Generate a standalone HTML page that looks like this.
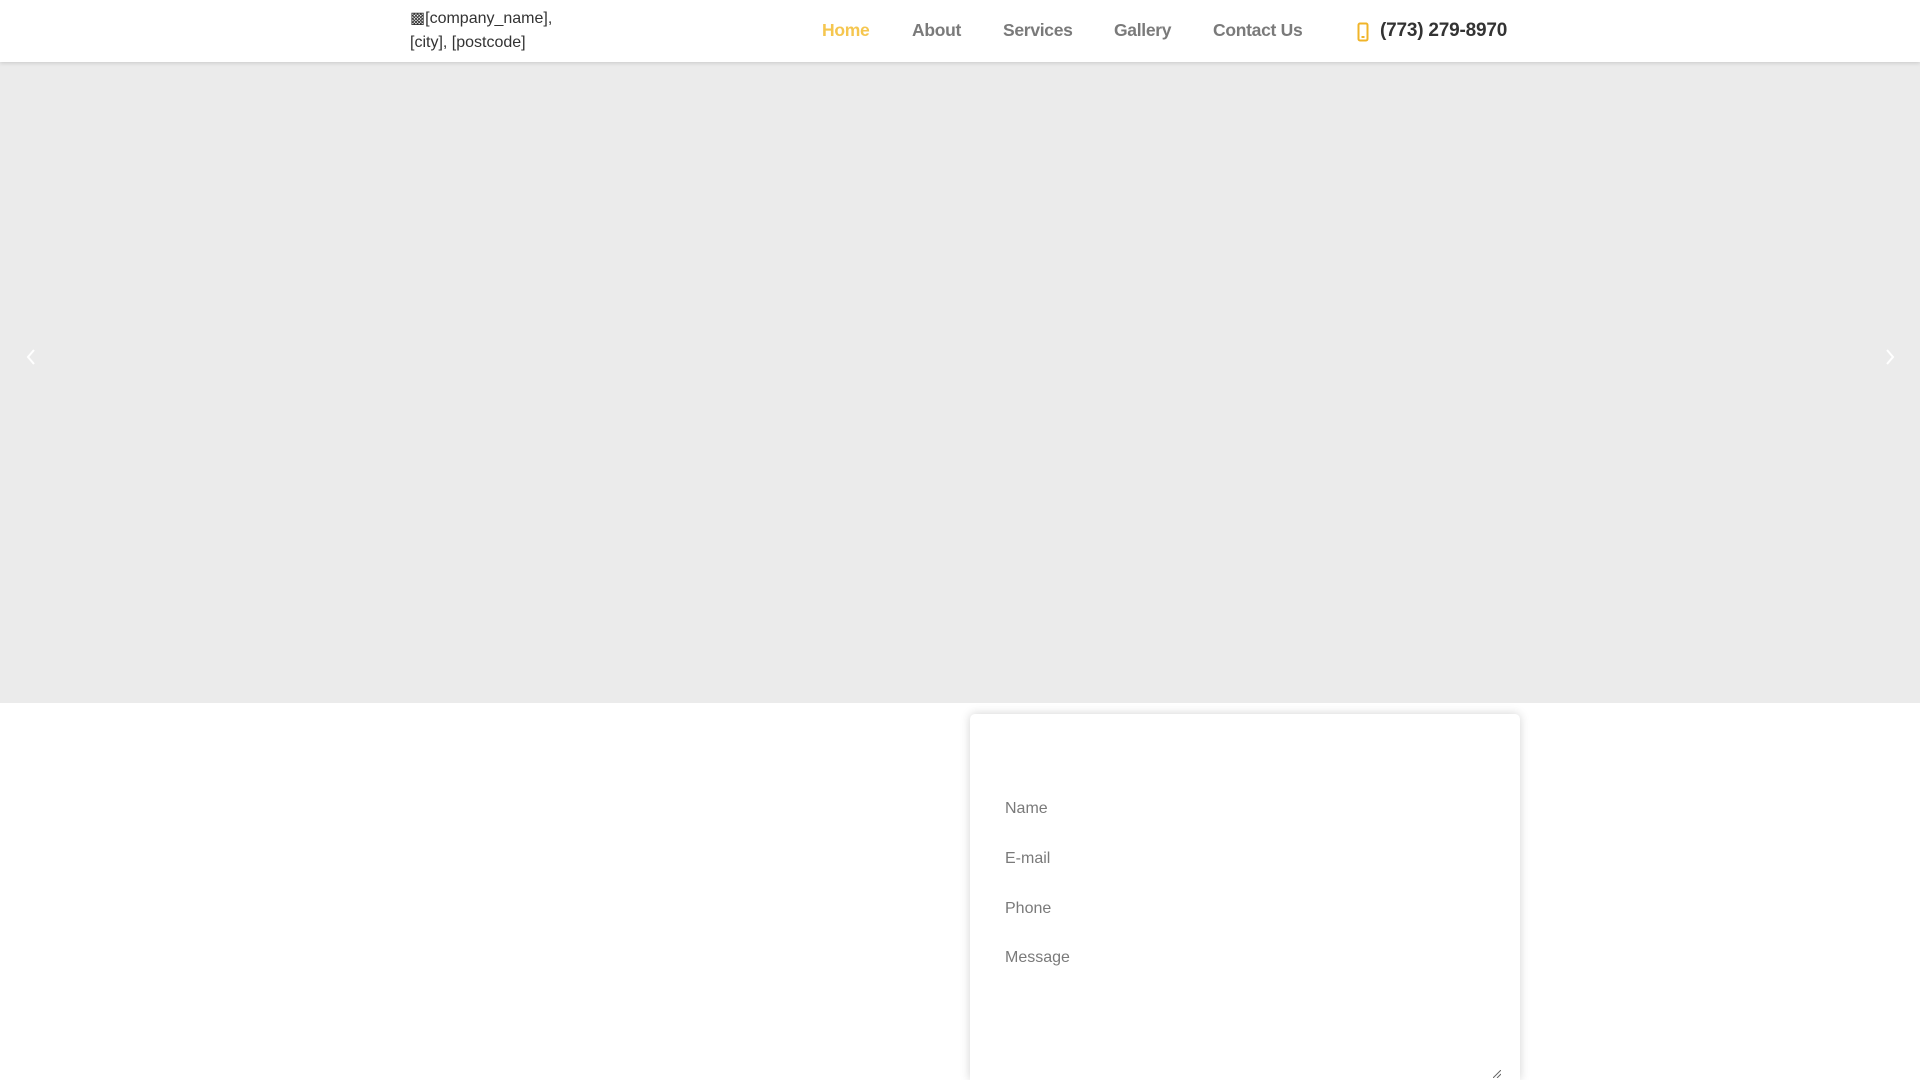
<!DOCTYPE html>
<html><head><meta charset="utf-8"><style>
*{margin:0;padding:0;box-sizing:border-box}
html,body{width:1920px;height:1080px;overflow:hidden}
body{background:#fff;font-family:"Liberation Sans",Arial,sans-serif;position:relative}
.hdr{position:absolute;left:0;top:0;width:1920px;height:62px;background:#fff;box-shadow:0 1px 4px rgba(0,0,0,.15);z-index:2}
.logo{position:absolute;left:410px;top:7px;font-size:16px;line-height:24px;color:#333}
.nav a{position:absolute;top:20px;font-size:17.5px;font-weight:bold;color:#7a7a7a;text-decoration:none;letter-spacing:-0.3px}
.ph{position:absolute;left:1380px;top:20px;font-size:19px;font-weight:bold;color:#333;letter-spacing:-0.2px}
.hero{position:absolute;left:0;top:62px;width:1920px;height:641px;background:#ebebeb}
.arr{position:absolute;top:285px}
.card{position:absolute;left:970px;top:714px;width:550px;height:366px;background:#fff;border-radius:5px 5px 0 0;box-shadow:0 0 10px rgba(0,0,0,.18)}
.lb{position:absolute;left:35px;font-size:16px;color:#7a7a7a}
</style></head><body>
<div class="hdr">
<div class="logo">&#9641;[company_name],<br>[city], [postcode]</div>
<div class="nav">
<a style="left:822px;color:#f5c64f">Home</a>
<a style="left:912px">About</a>
<a style="left:1003px">Services</a>
<a style="left:1114px">Gallery</a>
<a style="left:1213px">Contact Us</a>
</div>
<svg style="position:absolute;left:1357px;top:22px" width="12" height="20" viewBox="0 0 12 20"><rect x="1.5" y="1.5" width="9" height="17" rx="1.5" fill="none" stroke="#f0b429" stroke-width="2"/><rect x="4.5" y="14" width="3" height="2" fill="#f0b429"/></svg>
<div class="ph">(773) 279-8970</div>
</div>
<div class="hero">
<svg class="arr" style="left:24px" width="14" height="20" viewBox="0 0 14 20"><path d="M10 3L4 10l6 7" fill="none" stroke="#fff" stroke-width="2"/></svg>
<svg class="arr" style="left:1883px" width="14" height="20" viewBox="0 0 14 20"><path d="M4 3l6 7-6 7" fill="none" stroke="#fff" stroke-width="2"/></svg>
</div>
<div class="card">
<div class="lb" style="top:86px">Name</div>
<div class="lb" style="top:136px">E-mail</div>
<div class="lb" style="top:186px">Phone</div>
<div class="lb" style="top:235px">Message</div>
<svg style="position:absolute;left:523px;top:356px" width="8" height="8"><path d="M0 8L8 0M4 8L8 4" stroke="#666" stroke-width="1"/></svg>
</div>
</body></html>
